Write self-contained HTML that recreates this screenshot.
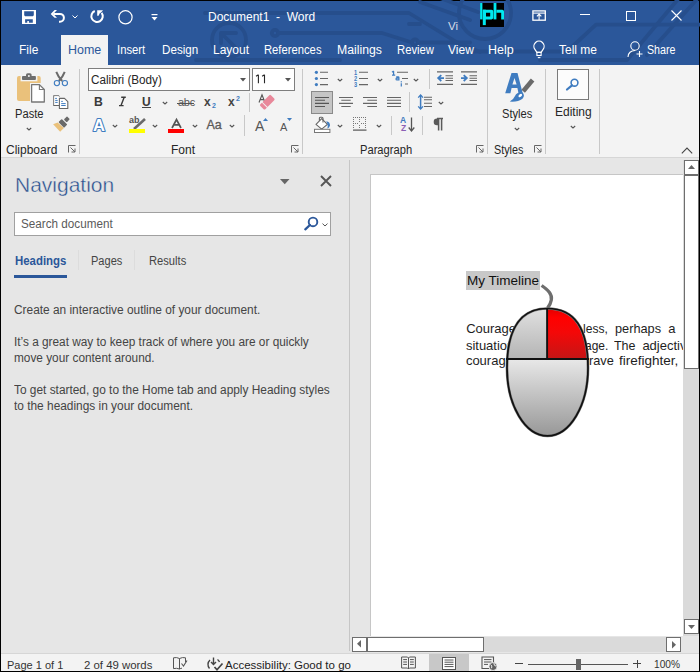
<!DOCTYPE html>
<html><head><meta charset="utf-8">
<style>
*{margin:0;padding:0;box-sizing:border-box}
html,body{width:700px;height:672px;overflow:hidden;background:#000;font-family:"Liberation Sans",sans-serif}
.a{position:absolute}
.t{position:absolute;white-space:nowrap;line-height:1;transform-origin:0 0}
svg{position:absolute;overflow:visible}
#title{left:1px;top:1px;width:698px;height:64px;background:#2B579A;overflow:hidden}
#ribbon{left:1px;top:65px;width:698px;height:92px;background:#F3F3F3}
#ribline{left:1px;top:157px;width:698px;height:1px;background:#D6D6D6}
#nav{left:1px;top:158px;width:349px;height:495px;background:#E6E6E6}
#navsep{left:349px;top:160px;width:1px;height:491px;background:#C6C6C6}
#doc{left:350px;top:158px;width:349px;height:495px;background:#E6E6E6}
#page{left:370px;top:174px;width:313px;height:462px;background:#fff;border-left:1px solid #C6C6C6;border-top:1px solid #C6C6C6}
#status{left:1px;top:653px;width:698px;height:18px;background:#F3F3F3;border-top:1px solid #D6D6D6}
.w{color:#fff;font-size:12px}
.rb{color:#262626;font-size:12px}
</style></head>
<body>
<div id="title" class="a"></div>
<!-- circuit pattern -->
<svg style="left:0;top:0" width="700" height="65" viewBox="0 0 700 65">
 <g fill="none" stroke="#264E8C" stroke-width="3.8" stroke-linejoin="round" stroke-linecap="round">
  <circle cx="229" cy="40" r="17"/>
  <path d="M221 33 H236 M221 33 V43 M221 33 L235 47"/>
  <circle cx="275" cy="33" r="3.2"/>
  <path d="M278 33 H382 L412 42.5"/>
  <circle cx="415" cy="42.5" r="3"/>
  <path d="M418 42.5 H470"/>
  <path d="M205 13 H409 L458 43 L480 52"/>
  <path d="M409 24 H420"/>
  <path d="M196 60 H340"/>
  <circle cx="485" cy="13" r="26"/>
  <path d="M420 2 L470 20 M440 -2 L478 12"/>
  <path d="M470 51.5 H567 L596 24.7 H700"/>
  <path d="M540 60 H627 L679 -2"/>
  <path d="M647 55 L698 -2"/>
 </g>
</svg>
<div id="tabhome" class="a" style="left:61px;top:35px;width:47px;height:30px;background:#F3F3F3"></div>

<!-- quick access toolbar -->
<svg style="left:22px;top:10px" width="14" height="14" viewBox="0 0 14 14">
 <path fill="#fff" fill-rule="evenodd" d="M0 0 H14 V14 H0 Z M2.2 1.2 H11.8 V5.3 L10.9 6.3 H3.1 L2.2 5.3 Z M3.1 9.2 H10.8 V12.8 H6.9 V11.1 H5.3 V12.8 H3.1 Z"/>
</svg>
<svg style="left:46px;top:6px" width="22" height="21" viewBox="0 0 22 21">
 <path fill="#fff" d="M4.7 7.9 L8.6 4 L11 4 L7.3 7.9 L11 11.8 L8.6 11.8 Z"/>
 <path d="M7.5 7.9 H14 A3.9 3.9 0 0 1 14 15.7 H13" fill="none" stroke="#fff" stroke-width="2"/>
</svg>
<svg style="left:72px;top:15px" width="6" height="4" viewBox="0 0 6 4"><path d="M0.5 0.5 L3 3 L5.5 0.5" fill="none" stroke="#fff" stroke-width="1"/></svg>
<svg style="left:86px;top:6px" width="22" height="21" viewBox="0 0 22 21">
 <path d="M8.8 5 A5.7 5.7 0 1 0 15.6 6.8" fill="none" stroke="#fff" stroke-width="2"/>
 <path fill="#fff" d="M11.2 4.2 H17 L15.5 6 L13.6 7.5 L12.6 9.8 H11.2 Z"/>
</svg>
<svg style="left:118px;top:10px" width="15" height="15" viewBox="0 0 15 15"><circle cx="7.5" cy="7.3" r="6.6" fill="none" stroke="#fff" stroke-width="1.2"/></svg>
<svg style="left:151px;top:14px" width="7" height="7" viewBox="0 0 7 7"><rect x="0.5" y="0" width="6" height="1.2" fill="#fff"/><path d="M0.5 3 H6.5 L3.5 6.5 Z" fill="#fff"/></svg>

<div class="t w" style="left:208px;top:11px">Document1&nbsp;&nbsp;-&nbsp;&nbsp;Word</div>
<div class="t" style="left:448px;top:21px;font-size:11.5px;color:#D5DCE8">Vi</div>
<svg style="left:480px;top:3px" width="24" height="24" viewBox="0 0 24 24">
 <rect x="0" y="0" width="24" height="24" fill="#000"/>
 <g fill="#00E8F0">
 <rect x="0.1" y="0" width="2.3" height="16.4"/>
 <rect x="2.8" y="6.7" width="3" height="15.4"/>
 <path fill-rule="evenodd" d="M2.8 6.7 H11.5 Q13.3 6.7 13.3 8.5 V14.6 Q13.3 16.4 11.5 16.4 H2.8 Z M6 9.8 H10.2 V13.4 H6 Z"/>
 <rect x="13.6" y="0" width="2.8" height="16.4"/>
 <path d="M16.4 6.7 H22.3 Q24 6.7 24 8.4 V16.4 H21.2 V9.8 H16.4 Z"/>
 </g>
</svg>

<!-- window controls -->
<svg style="left:531.5px;top:9.5px" width="14" height="11" viewBox="0 0 14 11">
 <rect x="0.9" y="0.9" width="12.4" height="9.3" fill="none" stroke="#fff" stroke-width="1.3"/>
 <path d="M1 3.1 H13.2" stroke="#fff" stroke-width="1.1"/>
 <path d="M7.1 3.4 V10 M4.9 6.4 L7.1 4.1 L9.3 6.4" fill="none" stroke="#fff" stroke-width="1.1"/>
</svg>
<div class="a" style="left:580px;top:14px;width:10px;height:1px;background:#fff"></div>
<div class="a" style="left:626px;top:11px;width:10px;height:10px;border:1px solid #fff"></div>
<svg style="left:671px;top:10px" width="11" height="11" viewBox="0 0 11 11"><path d="M0.5 0.5 L10.5 10.5 M10.5 0.5 L0.5 10.5" stroke="#fff" stroke-width="1.1"/></svg>

<!-- tabs -->
<div class="t w" style="left:19px;top:44px">File</div>
<div class="t" style="left:67.8px;top:44px;font-size:12px;color:#2B579A;transform:scaleX(1.04)">Home</div>
<div class="t w" style="left:116.6px;top:44px;transform:scaleX(0.94)">Insert</div>
<div class="t w" style="left:161.6px;top:44px;transform:scaleX(0.97)">Design</div>
<div class="t w" style="left:213px;top:44px">Layout</div>
<div class="t w" style="left:264.4px;top:44px;transform:scaleX(0.937)">References</div>
<div class="t w" style="left:336.8px;top:44px;transform:scaleX(1.02)">Mailings</div>
<div class="t w" style="left:396.6px;top:44px;transform:scaleX(0.94)">Review</div>
<div class="t w" style="left:448px;top:44px">View</div>
<div class="t w" style="left:488px;top:44px;transform:scaleX(1.04)">Help</div>
<svg style="left:533px;top:41px" width="13" height="18" viewBox="0 0 13 18">
 <path d="M3.9 11.3 L1.9 8.3 A5.1 5.1 0 1 1 10.1 8.3 L8.1 11.3 Z" fill="none" stroke="#fff" stroke-width="1.2" stroke-linejoin="round"/>
 <rect x="3.9" y="11.3" width="4.2" height="3.2" fill="none" stroke="#fff" stroke-width="1.1"/>
 <path d="M4.8 16.6 H7.4" stroke="#fff" stroke-width="1.1"/>
</svg>
<div class="t w" style="left:559px;top:44px">Tell me</div>
<svg style="left:627px;top:41px" width="17" height="17" viewBox="0 0 17 17">
 <circle cx="8" cy="5" r="4.2" fill="none" stroke="#fff" stroke-width="1.1"/>
 <path d="M1 16 C1 12 4 9.5 8 9.5" fill="none" stroke="#fff" stroke-width="1.1"/>
 <path d="M12.5 10 V16 M9.5 13 H15.5" stroke="#fff" stroke-width="1.1"/>
</svg>
<div class="t w" style="left:647px;top:44px;transform:scaleX(0.89)">Share</div>

<div id="ribbon" class="a"></div>
<div id="ribline" class="a"></div>
<!-- ===== RIBBON ===== -->
<!-- Clipboard -->
<svg style="left:16px;top:72px" width="30" height="32" viewBox="0 0 30 32">
 <rect x="1" y="3.9" width="23.7" height="25" rx="2" fill="#EAC17B"/>
 <rect x="4.6" y="0" width="16.8" height="9.3" fill="#F3F3F3"/>
 <rect x="6" y="3.9" width="13.9" height="4.1" rx="0.9" fill="#6E6E6E"/>
 <rect x="10" y="1.2" width="5.6" height="4.5" rx="1.6" fill="#6E6E6E"/>
 <circle cx="12.9" cy="4" r="1" fill="#F3F3F3"/>
 <rect x="14" y="11" width="16" height="21" fill="#F3F3F3"/>
 <path d="M15.6 12.6 H23.4 L28.3 17.5 V30 H15.6 Z" fill="#fff" stroke="#777" stroke-width="1.3" stroke-linejoin="round"/>
 <path d="M23.4 12.6 V17.5 H28.3" fill="none" stroke="#777" stroke-width="1.1"/>
</svg>
<div class="t rb" style="left:15px;top:108px;transform:scaleX(0.93)">Paste</div>
<svg style="left:26px;top:127px" width="6" height="4" viewBox="0 0 6 4"><path d="M0.8 1 L3 3 L5.2 1" fill="none" stroke="#555" stroke-width="1.1"/></svg>
<svg style="left:53px;top:71px" width="15" height="16" viewBox="0 0 15 16">
 <path d="M3.3 0.8 Q5 5.5 9.2 10 M11.7 0.8 Q10 5.5 5.8 10" fill="none" stroke="#6A6A6A" stroke-width="2"/>
 <circle cx="3.9" cy="12.1" r="2.6" fill="none" stroke="#3F7CC0" stroke-width="1.1"/>
 <circle cx="11.9" cy="12.1" r="2.6" fill="none" stroke="#3F7CC0" stroke-width="1.1"/>
</svg>
<svg style="left:53px;top:95px" width="16" height="15" viewBox="0 0 16 15">
 <path d="M6 10.5 H0.8 V0.8 H5.5 L6.5 1.8" fill="#fff" stroke="#666" stroke-width="1.1"/>
 <rect x="1.3" y="1.3" width="5" height="8.7" fill="#fff"/>
 <path d="M2.2 3.4 H3.9 M2.2 5.4 H4.7 M2.2 7.4 H4.7" stroke="#3F7CC0" stroke-width="1"/>
 <path d="M6.4 3.4 H11.5 L14.8 6.6 V13.5 H6.4 Z" fill="#fff" stroke="#666" stroke-width="1.1" stroke-linejoin="round"/>
 <path d="M8.2 6.4 H9.8 M8.2 8.6 H12.7 M8.2 10.5 H12.7" stroke="#3F7CC0" stroke-width="1"/>
</svg>
<svg style="left:53px;top:117px" width="17" height="15" viewBox="0 0 17 15">
 <g transform="translate(9.9 6.3) rotate(-45)">
  <path d="M-3.2 -4.3 L-2.6 4 L-7.9 4 L-7.6 -6.2 Z" fill="#EAC17B"/>
  <rect x="-2.3" y="-4" width="4.6" height="8" rx="0.8" fill="#6A6A6A"/>
  <rect x="3.4" y="-2" width="4.4" height="4" rx="0.6" fill="#6A6A6A"/>
 </g>
</svg>
<div class="t rb" style="left:6px;top:144px">Clipboard</div>
<svg style="left:68px;top:145px" width="8" height="8" viewBox="0 0 8 8"><path d="M0.5 7.5 V0.5 H7.5" fill="none" stroke="#666" stroke-width="1"/><path d="M2.5 2.5 L7 7 M7 3.5 V7 H3.5" fill="none" stroke="#666" stroke-width="1"/></svg>
<div class="a" style="left:79px;top:69px;width:1px;height:85px;background:#C8C8C8"></div>

<!-- Font -->
<div class="a" style="left:88px;top:68px;width:162px;height:23px;background:#fff;border:1px solid #7E7E7E"></div>
<div class="t rb" style="left:91px;top:74px;transform:scaleX(0.975)">Calibri (Body)</div>
<svg style="left:240px;top:78px" width="6" height="3.5" viewBox="0 0 6 3.5"><path d="M0 0 H6 L3 3.5 Z" fill="#555"/></svg>
<div class="a" style="left:252px;top:68px;width:43px;height:23px;background:#fff;border:1px solid #7E7E7E"></div>
<svg style="left:255px;top:74px" width="12" height="10" viewBox="0 0 12 10"><path d="M3.4 0.8 V9.2 M3.4 0.8 L1 2.3 M9.5 0.8 V9.2 M9.5 0.8 L7.1 2.3" fill="none" stroke="#262626" stroke-width="1.1"/></svg>
<svg style="left:285px;top:78px" width="6" height="3.5" viewBox="0 0 6 3.5"><path d="M0 0 H6 L3 3.5 Z" fill="#555"/></svg>

<div class="t" style="left:94px;top:96px;font-size:12.2px;font-weight:bold;color:#3A3A3A">B</div>
<svg style="left:118px;top:96px" width="9" height="11" viewBox="0 0 9 11"><path d="M3.2 1.3 H7.8 M1 9.6 H5.6 M6.2 1.3 L3 9.6" fill="none" stroke="#3A3A3A" stroke-width="1.4"/></svg>
<div class="t" style="left:142px;top:96px;font-size:12px;font-weight:bold;color:#3A3A3A">U</div>
<div class="a" style="left:142px;top:107px;width:9px;height:1px;background:#444"></div>
<svg style="left:162px;top:101px" width="6" height="4" viewBox="0 0 6 4"><path d="M0.8 1 L3 3 L5.2 1" fill="none" stroke="#555" stroke-width="1.1"/></svg>
<div class="t" style="left:178px;top:97px;font-size:11px;color:#555;letter-spacing:-0.3px">abc</div>
<div class="a" style="left:177px;top:103px;width:17px;height:1px;background:#555"></div>
<div class="t" style="left:204px;top:96px;font-size:12px;font-weight:bold;color:#444">x</div>
<div class="t" style="left:212px;top:102px;font-size:7px;font-weight:bold;color:#3F7CC0">2</div>
<div class="t" style="left:228px;top:96px;font-size:12px;font-weight:bold;color:#444">x</div>
<div class="t" style="left:236px;top:95px;font-size:7px;font-weight:bold;color:#3F7CC0">2</div>
<div class="a" style="left:249px;top:93px;width:1px;height:19px;background:#C8C8C8"></div>
<svg style="left:257px;top:93px" width="18" height="18" viewBox="0 0 18 18">
 <path d="M2 9.5 L5 1.8 L8 9.5 M3.2 6.6 H6.8" fill="none" stroke="#555" stroke-width="1.1"/>
 <g transform="translate(10.3 9.2) rotate(-45)"><rect x="-7.5" y="-3.5" width="15" height="7" rx="1.2" fill="#E8889A"/><rect x="-4.2" y="-4" width="1" height="8" fill="#F3F3F3"/></g>
</svg>

<svg style="left:91px;top:116px" width="16" height="16" viewBox="0 0 16 16"><text x="8" y="14.6" text-anchor="middle" font-family="Liberation Sans" font-weight="bold" font-size="16.5" fill="#fff" stroke="#3F7CC0" stroke-width="2.2" paint-order="stroke" stroke-linejoin="round">A</text></svg>
<svg style="left:112px;top:124px" width="6" height="4" viewBox="0 0 6 4"><path d="M0.8 1 L3 3 L5.2 1" fill="none" stroke="#555" stroke-width="1.1"/></svg>
<div class="t" style="left:129px;top:116px;font-size:9px;font-weight:bold;color:#555">ab</div>
<svg style="left:132px;top:118px" width="14" height="12" viewBox="0 0 14 12"><path d="M13 1 L2 11" stroke="#6A6A6A" stroke-width="2.6"/></svg>
<div class="a" style="left:129px;top:129px;width:16px;height:4px;background:#FFFF00"></div>
<svg style="left:152px;top:124px" width="6" height="4" viewBox="0 0 6 4"><path d="M0.8 1 L3 3 L5.2 1" fill="none" stroke="#555" stroke-width="1.1"/></svg>
<svg style="left:171px;top:119px" width="11" height="9" viewBox="0 0 11 9"><path d="M1 9 L5.5 0.6 L10 9 M2.8 5.8 H8.2" fill="none" stroke="#555" stroke-width="1.7"/></svg>
<div class="a" style="left:168px;top:129px;width:16px;height:3.5px;background:#FF0000"></div>
<svg style="left:192px;top:124px" width="6" height="4" viewBox="0 0 6 4"><path d="M0.8 1 L3 3 L5.2 1" fill="none" stroke="#555" stroke-width="1.1"/></svg>
<div class="t" style="left:206.5px;top:118.5px;font-size:12.5px;color:#5A5A5A;-webkit-text-stroke:0.3px #5A5A5A">Aa</div>
<svg style="left:229px;top:124px" width="6" height="4" viewBox="0 0 6 4"><path d="M0.8 1 L3 3 L5.2 1" fill="none" stroke="#555" stroke-width="1.1"/></svg>
<div class="a" style="left:244px;top:115px;width:1px;height:21px;background:#C8C8C8"></div>
<div class="t" style="left:255px;top:119px;font-size:14px;color:#555">A</div>
<svg style="left:263px;top:118px" width="5" height="3" viewBox="0 0 5 3"><path d="M0 3 L2.5 0 L5 3 Z" fill="#3F7CC0"/></svg>
<div class="t" style="left:280px;top:122px;font-size:11px;color:#555">A</div>
<svg style="left:287px;top:118px" width="5" height="3" viewBox="0 0 5 3"><path d="M0 0 H5 L2.5 3 Z" fill="#3F7CC0"/></svg>
<div class="t rb" style="left:171px;top:144px">Font</div>
<svg style="left:291px;top:145px" width="8" height="8" viewBox="0 0 8 8"><path d="M0.5 7.5 V0.5 H7.5" fill="none" stroke="#666" stroke-width="1"/><path d="M2.5 2.5 L7 7 M7 3.5 V7 H3.5" fill="none" stroke="#666" stroke-width="1"/></svg>
<div class="a" style="left:302px;top:69px;width:1px;height:85px;background:#C8C8C8"></div>

<!-- Paragraph -->
<svg style="left:313px;top:69px" width="16" height="18" viewBox="0 0 16 18">
 <g fill="#3F7CC0"><circle cx="3.4" cy="3.3" r="1.6"/><circle cx="3.4" cy="9.5" r="1.6"/><circle cx="3.4" cy="15.6" r="1.6"/></g>
 <path d="M7 3.3 H15 M7 9.5 H15 M7 15.6 H15" stroke="#666" stroke-width="1.1"/>
</svg>
<svg style="left:337px;top:78px" width="6" height="4" viewBox="0 0 6 4"><path d="M0.8 1 L3 3 L5.2 1" fill="none" stroke="#555" stroke-width="1.1"/></svg>
<div class="t" style="left:353.5px;top:70.3px;font-size:6.3px;font-weight:bold;color:#3F7CC0;line-height:6.05px;transform:scaleX(0.9)">1<br>2<br>3</div>
<svg style="left:358px;top:69px" width="10" height="18" viewBox="0 0 10 18"><path d="M1 3.3 H10 M1 9.5 H10 M1 15.6 H10" stroke="#666" stroke-width="1.1"/></svg>
<svg style="left:377px;top:78px" width="6" height="4" viewBox="0 0 6 4"><path d="M0.8 1 L3 3 L5.2 1" fill="none" stroke="#555" stroke-width="1.1"/></svg>
<svg style="left:391px;top:70px" width="12" height="17" viewBox="0 0 12 17"><g fill="none" stroke="#3F7CC0" stroke-width="1.2"><path d="M2.6 1 V5.2 M2.6 1 L1 2.2 M1 5.2 H4.2"/><path d="M5.2 6.9 H7.2 Q7.9 6.9 7.9 7.6 V9.9 H6 Q5 9.9 5 9 Q5 8.2 6 8.2 H7.9"/><path d="M10.3 13.2 V16.6"/></g><rect x="9.7" y="11.2" width="1.2" height="1.2" fill="#3F7CC0"/></svg>


<svg style="left:397px;top:69px" width="12" height="18" viewBox="0 0 12 18"><path d="M0 3.2 H11 M5 9.5 H11 M8 15 H11" stroke="#666" stroke-width="1.1"/></svg>
<svg style="left:413px;top:78px" width="6" height="4" viewBox="0 0 6 4"><path d="M0.8 1 L3 3 L5.2 1" fill="none" stroke="#555" stroke-width="1.1"/></svg>
<div class="a" style="left:429px;top:69px;width:1px;height:20px;background:#C8C8C8"></div>
<svg style="left:437px;top:71px" width="17" height="14" viewBox="0 0 17 14">
 <path d="M0 0.9 H16 M8.5 4.8 H16 M8.5 7.2 H16 M8.5 9.5 H16 M0 13.4 H16" stroke="#666" stroke-width="1.1"/>
 <path d="M7 7.1 H1.5 M4.3 4.2 L1.2 7.1 L4.3 10" fill="none" stroke="#3F7CC0" stroke-width="1.8"/>
</svg>
<svg style="left:461px;top:71px" width="17" height="14" viewBox="0 0 17 14">
 <path d="M0 0.9 H16 M8.5 4.8 H16 M8.5 7.2 H16 M8.5 9.5 H16 M0 13.4 H16" stroke="#666" stroke-width="1.1"/>
 <path d="M0 7.1 H5.5 M2.7 4.2 L5.8 7.1 L2.7 10" fill="none" stroke="#3F7CC0" stroke-width="1.8"/>
</svg>

<div class="a" style="left:311px;top:91px;width:22px;height:23px;background:#C5C5C5;border:1px solid #8A8A8A"></div>
<svg style="left:315px;top:96px" width="14" height="12" viewBox="0 0 14 12"><path d="M0 1.5 H14 M0 4.3 H10 M0 7.4 H14 M0 10.5 H10" stroke="#555" stroke-width="1.1"/></svg>
<svg style="left:339px;top:96px" width="14" height="12" viewBox="0 0 14 12"><path d="M0 1.5 H14 M2.3 4.3 H11.7 M0 7.4 H14 M2.3 10.5 H11.7" stroke="#666" stroke-width="1.1"/></svg>
<svg style="left:363px;top:96px" width="14" height="12" viewBox="0 0 14 12"><path d="M0 1.5 H14 M4.3 4.3 H14 M0 7.4 H14 M4.3 10.5 H14" stroke="#666" stroke-width="1.1"/></svg>
<svg style="left:387px;top:96px" width="14" height="12" viewBox="0 0 14 12"><path d="M0 1.5 H14 M0 4.3 H14 M0 7.4 H14 M0 10.5 H14" stroke="#666" stroke-width="1.1"/></svg>
<div class="a" style="left:409px;top:92px;width:1px;height:20px;background:#C8C8C8"></div>
<svg style="left:417px;top:94px" width="16" height="16" viewBox="0 0 16 16">
 <path d="M3.6 1.2 V14.8" stroke="#3F7CC0" stroke-width="1.5"/><path d="M1.2 3.6 L3.6 1 L6 3.6 M1.2 12.4 L3.6 15 L6 12.4" fill="none" stroke="#3F7CC0" stroke-width="1.3"/>
 <path d="M7 3.3 H15 M7 5.8 H15 M7 9.3 H15 M7 12.5 H15" stroke="#666" stroke-width="1.1"/>
</svg>
<svg style="left:438px;top:101px" width="6" height="4" viewBox="0 0 6 4"><path d="M0.8 1 L3 3 L5.2 1" fill="none" stroke="#555" stroke-width="1.1"/></svg>

<svg style="left:314px;top:116px" width="18" height="17" viewBox="0 0 18 17">
 <path d="M2 8.3 L7.7 2.6 L13.4 8.3 L7.7 13.1 Z" fill="#fff" stroke="#666" stroke-width="1.1" stroke-linejoin="round"/>
 <path d="M5.4 4.8 V2 Q5.4 1.2 6.6 1.2 H7.8 Q9 1.2 9 2.2 V6.5" fill="none" stroke="#666" stroke-width="1.1"/>
 <path d="M12.2 5.2 Q16.2 5.8 16 9.5 Q15.5 11.8 13.3 12.6 Q14.6 9 12.2 5.2 Z" fill="#3F7CC0"/>
 <rect x="0.5" y="13.3" width="15.4" height="3.2" fill="#fff" stroke="#777" stroke-width="1"/>
</svg>
<svg style="left:337px;top:124px" width="6" height="4" viewBox="0 0 6 4"><path d="M0.8 1 L3 3 L5.2 1" fill="none" stroke="#555" stroke-width="1.1"/></svg>
<svg style="left:353px;top:117px" width="15" height="14" viewBox="0 0 15 14">
 <g fill="#777">
  <rect x="0" y="0" width="1" height="1"/><rect x="2" y="0" width="1" height="1"/><rect x="4" y="0" width="1" height="1"/><rect x="6" y="0" width="1" height="1"/><rect x="8" y="0" width="1" height="1"/><rect x="10" y="0" width="1" height="1"/><rect x="12" y="0" width="1" height="1"/>
  <rect x="0" y="2" width="1" height="1"/><rect x="0" y="4" width="1" height="1"/><rect x="0" y="6" width="1" height="1"/><rect x="0" y="8" width="1" height="1"/><rect x="0" y="10" width="1" height="1"/>
  <rect x="12" y="2" width="1" height="1"/><rect x="12" y="4" width="1" height="1"/><rect x="12" y="6" width="1" height="1"/><rect x="12" y="8" width="1" height="1"/><rect x="12" y="10" width="1" height="1"/>
  <rect x="6" y="2" width="1" height="1"/><rect x="6" y="4" width="1" height="1"/><rect x="6" y="8" width="1" height="1"/><rect x="6" y="10" width="1" height="1"/>
  <rect x="2" y="6" width="1" height="1"/><rect x="4" y="6" width="1" height="1"/><rect x="8" y="6" width="1" height="1"/><rect x="10" y="6" width="1" height="1"/>
 </g>
 <rect x="0" y="12.5" width="13.5" height="1.2" fill="#555"/>
</svg>
<svg style="left:376px;top:124px" width="6" height="4" viewBox="0 0 6 4"><path d="M0.8 1 L3 3 L5.2 1" fill="none" stroke="#555" stroke-width="1.1"/></svg>
<div class="a" style="left:391px;top:116px;width:1px;height:19px;background:#C8C8C8"></div>
<div class="t" style="left:400px;top:116px;font-size:8.5px;font-weight:bold;color:#3F7CC0">A</div>
<div class="t" style="left:401px;top:124px;font-size:8.5px;font-weight:bold;color:#8B5FB5">Z</div>
<svg style="left:408px;top:117px" width="7" height="15" viewBox="0 0 7 15"><path d="M3.5 0.5 V14 M0.7 10.5 L3.5 14 L6.3 10.5" fill="none" stroke="#555" stroke-width="1.3"/></svg>
<div class="a" style="left:422px;top:116px;width:1px;height:19px;background:#C8C8C8"></div>
<svg style="left:432px;top:118px" width="12" height="13" viewBox="0 0 12 13"><path d="M5 0.6 H11 M6.6 0.6 V12.5 M9.6 0.6 V12.5" fill="none" stroke="#5A5A5A" stroke-width="1.5"/><path d="M6.6 0.6 H5 A3.3 3.3 0 0 0 5 7.2 H6.6 Z" fill="#5A5A5A"/></svg>
<div class="t rb" style="left:360px;top:144px;transform:scaleX(0.93)">Paragraph</div>
<svg style="left:476px;top:145px" width="8" height="8" viewBox="0 0 8 8"><path d="M0.5 7.5 V0.5 H7.5" fill="none" stroke="#666" stroke-width="1"/><path d="M2.5 2.5 L7 7 M7 3.5 V7 H3.5" fill="none" stroke="#666" stroke-width="1"/></svg>
<div class="a" style="left:487px;top:69px;width:1px;height:85px;background:#C8C8C8"></div>

<!-- Styles -->
<svg style="left:504px;top:72px" width="30" height="31" viewBox="0 0 30 31">
 <path fill="#3F7CC0" fill-rule="evenodd" d="M7.5 1 H13.5 L18.7 21.2 H14.5 L13.4 16 H7.6 L6.4 21.2 H1.2 Z M10.5 6 L8.4 12.5 H12.6 Z"/>
 <path d="M28.6 8 L19.2 19.2" stroke="#6A6A6A" stroke-width="4.6"/>
 <path d="M18.2 20.3 Q21.5 23.5 18.5 26.8 Q14 30.2 5.8 29.6 Q9.5 27.5 11 24 Q13 19.8 18.2 20.3 Z" fill="#3F7CC0"/>
 <ellipse cx="16.3" cy="23.6" rx="2.1" ry="1.3" transform="rotate(-40 16.3 23.6)" fill="#fff"/>
</svg>
<div class="t rb" style="left:502px;top:108px;transform:scaleX(0.93)">Styles</div>
<svg style="left:514px;top:127px" width="6" height="4" viewBox="0 0 6 4"><path d="M0.8 1 L3 3 L5.2 1" fill="none" stroke="#555" stroke-width="1.1"/></svg>
<div class="t rb" style="left:494px;top:144px;transform:scaleX(0.9)">Styles</div>
<svg style="left:534px;top:145px" width="8" height="8" viewBox="0 0 8 8"><path d="M0.5 7.5 V0.5 H7.5" fill="none" stroke="#666" stroke-width="1"/><path d="M2.5 2.5 L7 7 M7 3.5 V7 H3.5" fill="none" stroke="#666" stroke-width="1"/></svg>
<div class="a" style="left:545px;top:69px;width:1px;height:85px;background:#C8C8C8"></div>

<!-- Editing -->
<div class="a" style="left:557px;top:69px;width:32px;height:31px;background:#FCFCFC;border:1px solid #7A7A7A"></div>
<svg style="left:565px;top:77px" width="14" height="14" viewBox="0 0 14 14">
 <circle cx="9.5" cy="5.7" r="3.4" fill="none" stroke="#3F7CC0" stroke-width="1.6"/>
 <path d="M7 8.3 L2 12.5" stroke="#3F7CC0" stroke-width="2.2" stroke-linecap="round"/>
</svg>
<div class="t rb" style="left:555px;top:106.3px">Editing</div>
<svg style="left:570px;top:125px" width="6" height="4" viewBox="0 0 6 4"><path d="M0.8 1 L3 3 L5.2 1" fill="none" stroke="#555" stroke-width="1.1"/></svg>
<div class="a" style="left:599px;top:69px;width:1px;height:85px;background:#C8C8C8"></div>
<svg style="left:681px;top:147px" width="12" height="7" viewBox="0 0 12 7"><path d="M0.8 6.3 L6 1 L11.2 6.3" fill="none" stroke="#444" stroke-width="1.1"/></svg>

<div id="nav" class="a"></div>
<div id="navsep" class="a"></div>
<!-- ===== NAV PANE ===== -->
<div class="t" style="left:15px;top:174px;font-size:21px;color:#244C8C;-webkit-text-stroke:0.4px #E6E6E6">Navigation</div>
<svg style="left:280px;top:179px" width="10" height="6" viewBox="0 0 10 6"><path d="M0 0 H9.5 L4.75 5.3 Z" fill="#666"/></svg>
<svg style="left:320px;top:175px" width="12" height="12" viewBox="0 0 12 12"><path d="M1 1 L11 11 M11 1 L1 11" stroke="#555" stroke-width="1.9"/></svg>
<div class="a" style="left:14px;top:212px;width:317px;height:24px;background:#fff;border:1px solid #A0A0A0"></div>
<div class="t" style="left:21px;top:218px;font-size:12px;color:#5A5A5A;transform:scaleX(0.975)">Search document</div>
<svg style="left:303px;top:215px" width="16" height="16" viewBox="0 0 16 16">
 <circle cx="10" cy="6.9" r="4.3" fill="none" stroke="#2B579A" stroke-width="1.9"/>
 <path d="M6.9 10 L2.3 14.3" stroke="#2B579A" stroke-width="2.3" stroke-linecap="round"/>
</svg>
<svg style="left:322px;top:223px" width="6" height="4" viewBox="0 0 6 4"><path d="M0.5 0.6 L3 3 L5.5 0.6" fill="none" stroke="#555" stroke-width="1"/></svg>
<div class="t" style="left:15px;top:255px;font-size:12px;font-weight:bold;color:#2B579A;transform:scaleX(0.95)">Headings</div>
<div class="a" style="left:14px;top:275px;width:53px;height:3px;background:#2B579A"></div>
<div class="a" style="left:78px;top:250px;width:1px;height:20px;background:#DCDCDC"></div>
<div class="t" style="left:91px;top:255px;font-size:12px;color:#444;transform:scaleX(0.92)">Pages</div>
<div class="a" style="left:134px;top:250px;width:1px;height:20px;background:#DCDCDC"></div>
<div class="t" style="left:149px;top:255px;font-size:12px;color:#444;transform:scaleX(0.93)">Results</div>
<div class="t" style="left:14px;top:302px;font-size:12px;color:#444;line-height:16px;transform:scaleX(0.99)">Create an interactive outline of your document.</div>
<div class="t" style="left:14px;top:334px;font-size:12px;color:#444;line-height:16px;transform:scaleX(0.985)">It’s a great way to keep track of where you are or quickly<br>move your content around.</div>
<div class="t" style="left:14px;top:382px;font-size:12px;color:#444;line-height:16px;transform:scaleX(0.99)">To get started, go to the Home tab and apply Heading styles<br>to the headings in your document.</div>

<div id="doc" class="a"></div>
<div id="page" class="a"></div>
<!-- ===== DOCUMENT ===== -->
<div class="a" style="left:466px;top:271px;width:74px;height:19px;background:#C8C8C8"></div>
<div class="t" style="left:467px;top:274px;font-size:13.5px;color:#111">My Timeline</div>
<div class="a" style="left:371px;top:175px;width:312px;height:460px;overflow:hidden;color:#1E1E1E;font-size:13px">
 <div class="t" style="left:95.2px;top:146.5px">Courage is fearless,</div>
 <div class="t" style="left:211.9px;top:146.5px;transform:scaleX(0.93)">less,</div>
 <div class="t" style="left:243.9px;top:146.5px;transform:scaleX(0.98)">perhaps</div>
 <div class="t" style="left:297.3px;top:146.5px">a</div>
 <div class="t" style="left:94.9px;top:163.5px">situation challenge.</div>
 <div class="t" style="left:213.5px;top:163.5px;transform:scaleX(0.92)">age.</div>
 <div class="t" style="left:243.2px;top:163.5px;transform:scaleX(0.96)">The</div>
 <div class="t" style="left:271.4px;top:163.5px">adjective</div>
 <div class="t" style="left:94.9px;top:179.4px">courageous brave</div>
 <div class="t" style="left:218.1px;top:179.4px;transform:scaleX(0.98)">rave</div>
 <div class="t" style="left:248.3px;top:179.4px;transform:scaleX(1.04)">firefighter,</div>
</div>
<!-- mouse -->
<svg style="left:0;top:0" width="700" height="672" viewBox="0 0 700 672">
 <defs>
  <linearGradient id="gl" x1="0" y1="0" x2="0" y2="1"><stop offset="0" stop-color="#E8E8E8"/><stop offset="1" stop-color="#B4B4B4"/></linearGradient>
  <linearGradient id="gr" x1="0" y1="0" x2="0" y2="1"><stop offset="0" stop-color="#C80000"/><stop offset="0.3" stop-color="#FF0000"/><stop offset="0.55" stop-color="#F40808"/><stop offset="1" stop-color="#C41616"/></linearGradient>
  <linearGradient id="gb" x1="0" y1="0" x2="0" y2="1"><stop offset="0" stop-color="#E8E8E8"/><stop offset="1" stop-color="#929292"/></linearGradient>
  <clipPath id="mc"><path d="M507 368 C507 314 532.5 308.5 547.5 308.5 C562.5 308.5 588 314 588 368 A40.5 67.8 0 0 1 507 368 Z"/></clipPath>
 </defs>
 <path d="M541.6 285.5 C548 290 552.5 294 551.3 300 C550.8 303 549.5 305.5 547.6 308" fill="none" stroke="#6E6E6E" stroke-width="3.3"/>
 <g clip-path="url(#mc)">
  <rect x="500" y="300" width="47" height="59" fill="url(#gl)"/>
  <rect x="547" y="300" width="45" height="59" fill="url(#gr)"/>
  <rect x="500" y="359" width="92" height="82" fill="url(#gb)"/>
 </g>
 <path d="M507 368 C507 314 532.5 308.5 547.5 308.5 C562.5 308.5 588 314 588 368 A40.5 67.8 0 0 1 507 368 Z" fill="none" stroke="#808080" stroke-width="2.7"/>
 <path d="M507 368 C507 314 532.5 308.5 547.5 308.5 C562.5 308.5 588 314 588 368 A40.5 67.8 0 0 1 507 368 Z" fill="none" stroke="#111" stroke-width="1.7"/>
 <path d="M547.1 308 V359 M506 359 H589" stroke="#111" stroke-width="1.9"/>
 
</svg>

<!-- vertical scrollbar -->
<div class="a" style="left:683px;top:158px;width:16px;height:478px;background:#DADADA"></div>
<div class="a" style="left:683px;top:158px;width:16px;height:2px;background:#E6E6E6"></div>
<div class="a" style="left:684px;top:160px;width:15px;height:15px;background:#fff;border:1px solid #6E6E6E"></div>
<svg style="left:688px;top:165px" width="7" height="4" viewBox="0 0 7 4"><path d="M0 4 L3.5 0 L7 4 Z" fill="#666"/></svg>
<div class="a" style="left:684px;top:174px;width:15px;height:195px;background:#fff;border:1px solid #6E6E6E;border-top-width:2px"></div>
<div class="a" style="left:684px;top:619px;width:15px;height:15px;background:#fff;border:1px solid #6E6E6E"></div>
<svg style="left:688px;top:625px" width="7" height="4" viewBox="0 0 7 4"><path d="M0 0 H7 L3.5 4 Z" fill="#666"/></svg>
<!-- horizontal scrollbar -->
<div class="a" style="left:350px;top:636px;width:349px;height:17px;background:#E6E6E6"></div>
<div class="a" style="left:366px;top:637px;width:315px;height:15px;background:#DADADA"></div>
<div class="a" style="left:352px;top:637px;width:15px;height:15px;background:#fff;border:1px solid #6E6E6E"></div>
<svg style="left:357px;top:640px" width="4" height="8" viewBox="0 0 4 8"><path d="M4 0 V7.5 L0 3.75 Z" fill="#666"/></svg>
<div class="a" style="left:366px;top:637px;width:118px;height:15px;background:#fff;border:1px solid #6E6E6E;border-left-width:2px"></div>
<div class="a" style="left:666px;top:637px;width:15px;height:15px;background:#fff;border:1px solid #6E6E6E"></div>
<svg style="left:672px;top:641px" width="4" height="8" viewBox="0 0 4 8"><path d="M0 0 V7.5 L4 3.75 Z" fill="#666"/></svg>
<div id="status" class="a"></div>
<!-- ===== STATUS ===== -->
<div class="t" style="left:7px;top:659.6px;font-size:11px;color:#333">Page 1 of 1</div>
<div class="t" style="left:84px;top:659.6px;font-size:11.4px;color:#333">2 of 49 words</div>
<svg style="left:173px;top:657px" width="15" height="13" viewBox="0 0 15 13">
 <path d="M0.5 0.8 Q3.5 0 6.5 1.5 V12 Q3.5 10.8 0.5 11.6 Z" fill="none" stroke="#555" stroke-width="1"/>
 <path d="M6.5 1.5 Q9.5 0 12.5 0.8 V5" fill="none" stroke="#555" stroke-width="1"/>
 <path d="M6.5 12 Q8 11.2 9 11.2" fill="none" stroke="#555" stroke-width="1"/>
 <path d="M8.5 6.5 L10.5 9 L14 3.5" fill="none" stroke="#555" stroke-width="1.1"/>
</svg>
<svg style="left:206px;top:657px" width="18" height="14" viewBox="0 0 18 14">
 <path d="M4 3 A6 6 0 0 0 3.5 11.5 M11.5 2.5 A6 6 0 0 1 13.5 5" fill="none" stroke="#444" stroke-width="1.4"/>
 <path d="M7.5 0.5 V7.5 M5 5 L7.5 7.5 L10 5" fill="none" stroke="#444" stroke-width="1.4"/>
 <path d="M8.5 10 L11 12.8 L16.5 6.5" fill="none" stroke="#444" stroke-width="1.7"/>
</svg>
<div class="t" style="left:225px;top:659.6px;font-size:11.5px;color:#222">Accessibility: Good to go</div>
<svg style="left:401px;top:656px" width="15" height="14" viewBox="0 0 15 14">
 <path d="M0.6 1 H6.5 L7.5 2 L8.5 1 H14.4 V12 H8.5 L7.5 13 L6.5 12 H0.6 Z" fill="none" stroke="#555" stroke-width="1"/>
 <path d="M2.2 3.6 H6 M2.2 6 H6 M2.2 8.4 H6 M9 3.6 H12.8 M9 6 H12.8 M9 8.4 H12.8 M7.5 2 V13" stroke="#555" stroke-width="1"/>
</svg>
<div class="a" style="left:429px;top:654px;width:40px;height:17px;background:#C8C8C8"></div>
<svg style="left:442px;top:657px" width="15" height="13" viewBox="0 0 15 13">
 <rect x="0.5" y="0.5" width="13" height="12" fill="#fff" stroke="#555" stroke-width="1"/>
 <path d="M2.5 3 H11.5 M2.5 5.2 H11.5 M2.5 7.4 H11.5 M2.5 9.6 H11.5" stroke="#555" stroke-width="1"/>
</svg>
<svg style="left:481px;top:656px" width="17" height="15" viewBox="0 0 17 15">
 <path d="M8 12.5 H1 V1 H12.5 V7" fill="none" stroke="#555" stroke-width="1.1"/>
 <path d="M3 3.6 H10.5 M3 6 H10.5 M3 8.4 H7" stroke="#555" stroke-width="1"/>
 <circle cx="12" cy="10.5" r="4" fill="#606060" stroke="#F3F3F3" stroke-width="0.8"/>
 <path d="M9.6 8.6 Q11.5 9.5 10.6 12.2 M12.8 7.2 Q13 10 15.2 10.2" fill="none" stroke="#fff" stroke-width="0.9"/>
</svg>
<div class="a" style="left:515px;top:663px;width:8px;height:1px;background:#444"></div>
<div class="a" style="left:528px;top:664px;width:100px;height:1px;background:#555"></div>
<div class="a" style="left:576px;top:659px;width:5px;height:11px;background:#666"></div>
<div class="a" style="left:633px;top:663px;width:8px;height:1px;background:#444"></div>
<div class="a" style="left:636.5px;top:660px;width:1px;height:8px;background:#444"></div>
<div class="t" style="left:654px;top:659px;font-size:11.3px;color:#333;transform:scaleX(0.9)">100%</div>

</body></html>
